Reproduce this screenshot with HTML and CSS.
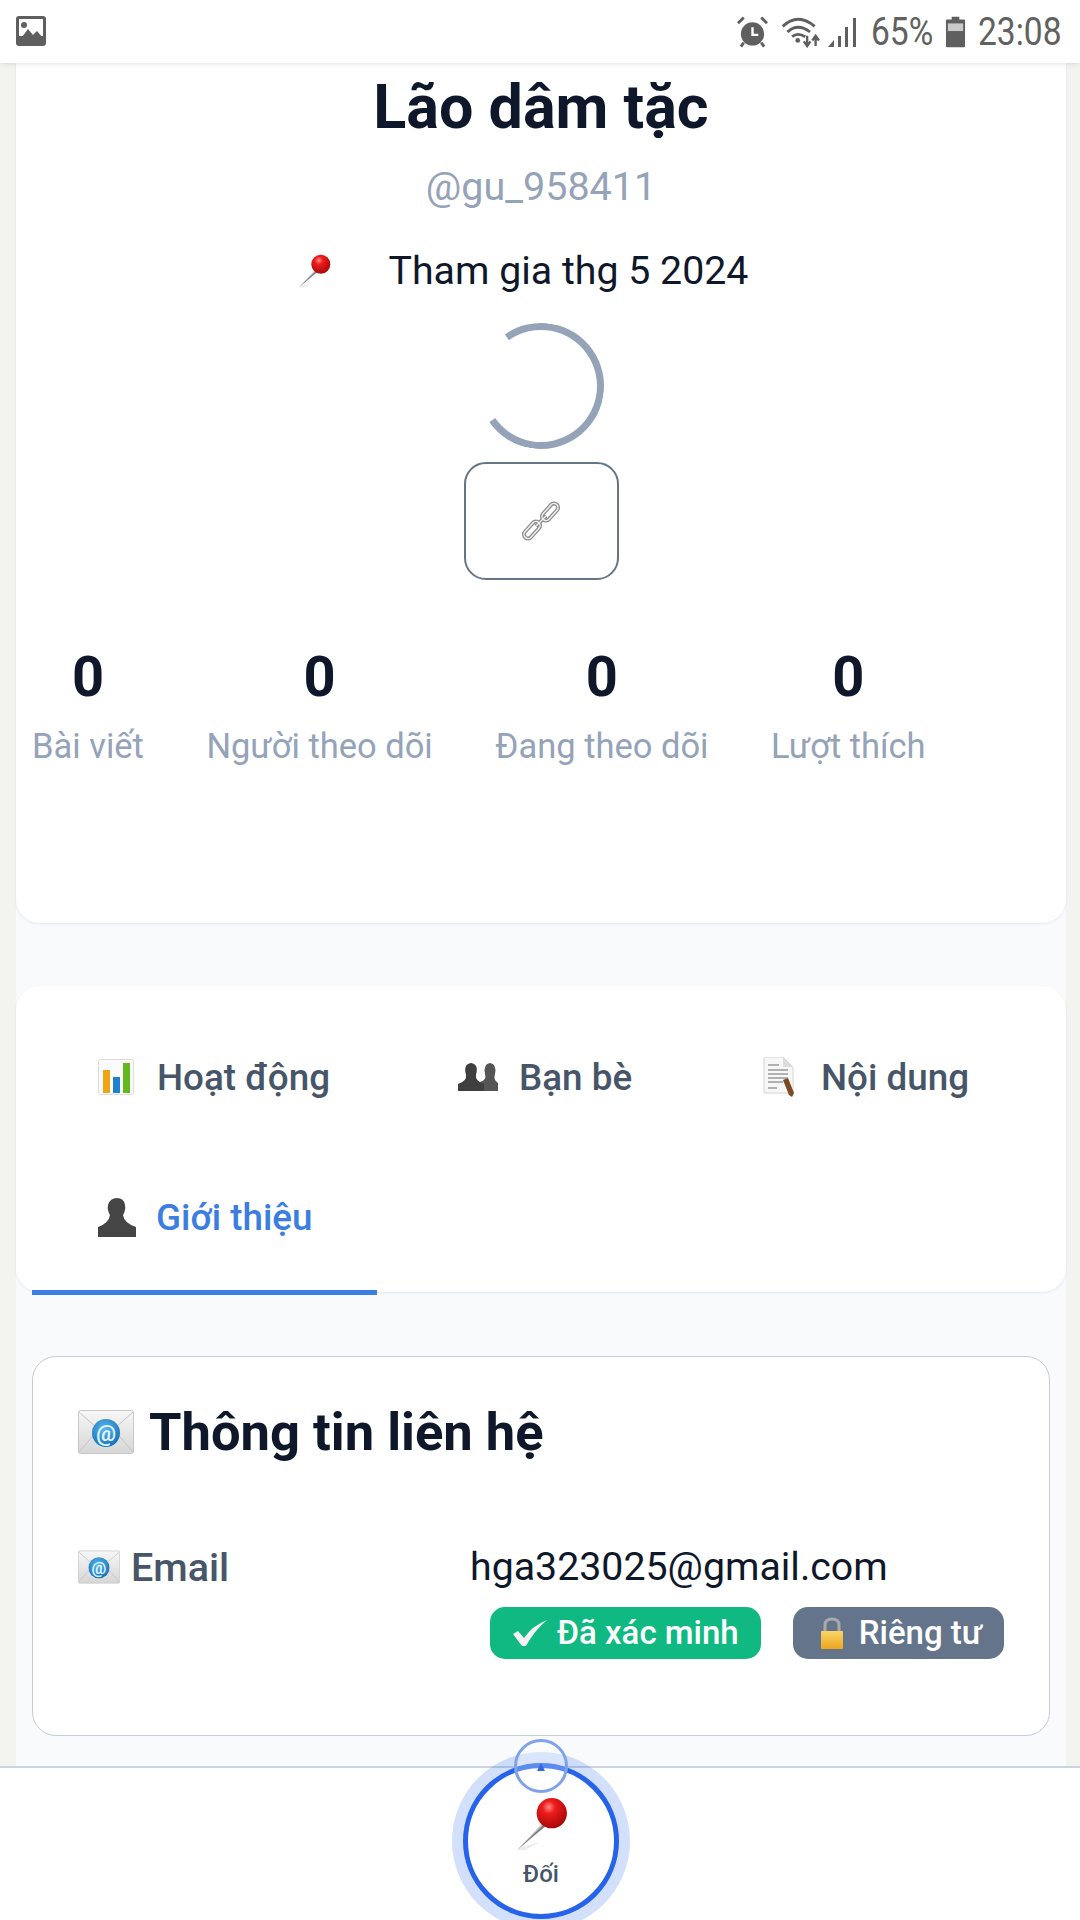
FILE: index.html
```html
<!DOCTYPE html>
<html lang="vi">

<head>
    <meta charset="UTF-8">
    <meta name="viewport" content="width=device-width, initial-scale=1.0">
    <title>Lão dâm tặc</title>
    <link rel="stylesheet" href="styles.css">
</head>

<body>
    <svg class="icon-defs" width="0" height="0">
        <defs>
            <radialGradient id="pinHead" cx="40%" cy="30%" r="70%">
                <stop offset="0" stop-color="#ff8a8a"/>
                <stop offset="0.3" stop-color="#ee1c1c"/>
                <stop offset="1" stop-color="#a80808"/>
            </radialGradient>
            <linearGradient id="paper" x1="0" y1="0" x2="0" y2="1">
                <stop offset="0" stop-color="#f7f7f7"/>
                <stop offset="1" stop-color="#d6d6d6"/>
            </linearGradient>
            <radialGradient id="atBlue" cx="45%" cy="35%" r="70%">
                <stop offset="0" stop-color="#5db7ec"/>
                <stop offset="1" stop-color="#0f6fb5"/>
            </radialGradient>
            <linearGradient id="shackle" x1="0" y1="0" x2="0" y2="1">
                <stop offset="0" stop-color="#f9d667"/>
                <stop offset="1" stop-color="#eda51c"/>
            </linearGradient>
        </defs>
        <symbol id="pin" viewBox="0 0 50 50">
            <path d="M3 49 L10 49 L24 42 L8 46 Z" fill="#ddd" opacity="0.6"/>
            <path d="M3 49 L31 20 L34 23 Z" fill="#7d7d7d"/>
            <path d="M3 49 L31 20 L32 21 Z" fill="#c9c9c9"/>
            <circle cx="35" cy="15" r="14" fill="url(#pinHead)"/>
        </symbol>
    </svg>

    <div class="phone">
        <header class="status-bar">
            <svg class="status-picture" viewBox="0 0 30 30" width="30" height="30">
                <rect width="30" height="30" rx="3" fill="#5f5f5f"/>
                <rect x="3" y="3" width="24" height="17" fill="#fff"/>
                <circle cx="8" cy="9" r="3" fill="#5f5f5f"/>
                <path d="M3 25 L12 13 L17 19 L21 15 L27 22 V27 H3 Z" fill="#5f5f5f"/>
            </svg>
            <div class="status-right">
                <svg viewBox="0 0 32 32" width="31" height="32">
                    <circle cx="16" cy="18" r="12" fill="#5f5f5f"/>
                    <path d="M1 7 L7 1 M31 7 L25 1 M7 27 L4 31 M25 27 L28 31" stroke="#5f5f5f" stroke-width="3"/>
                    <path d="M16 11 V19 H22" fill="none" stroke="#fff" stroke-width="2.500"/>
                </svg>
                <svg class="status-wifi" viewBox="0 0 44 34" width="43" height="32">
                    <path d="M2 11 Q18 -4 36 11 M7 17 Q18 7 31 17 M12 22 Q18 17 26 22" fill="none" stroke="#5f5f5f" stroke-width="3"/>
                    <circle cx="18" cy="26" r="2.500" fill="#5f5f5f"/>
                    <path d="M28 21 V31 M24.500 27 L28 32 L31.500 27 M37 32 V22 M33.500 26 L37 21 L40.500 26" fill="none" stroke="#5f5f5f" stroke-width="2.500"/>
                </svg>
                <svg class="status-signal" viewBox="0 0 32 32" width="32" height="32">
                    <path d="M0 31 L6 24 V31 Z M10 20 H13 V31 H10 Z M17 11 H20 V31 H17 Z M25 2 H28 V31 H25 Z" fill="#5f5f5f"/>
                </svg>
                <span class="status-text status-battery">65%</span>
                <svg viewBox="0 0 22 32" width="21" height="32">
                    <path d="M7 0 H15 V3 H20 Q21 3 21 4 V31 Q21 32 20 32 H2 Q1 32 1 31 V4 Q1 3 2 3 H7 Z" fill="#5f5f5f"/>
                    <rect x="3" y="7" width="16" height="8" fill="#c9c9c9"/>
                </svg>
                <span class="status-text status-time">23:08</span>
            </div>
        </header>

        <main class="content">
            <section class="card profile">
                <h1 class="profile-name">Lão dâm tặc</h1>
                <p class="profile-handle">@gu_958411</p>
                <p class="profile-joined">
                    <svg width="34" height="34"><use href="#pin"/></svg>
                    <span>Tham gia thg 5 2024</span>
                </p>
                <div class="spinner"></div>
                <button class="link-btn" type="button">
                    <svg viewBox="0 0 40 40" width="40" height="40">
                        <g fill="none" stroke="#8d8d8d" stroke-width="4">
                            <rect x="25" y="1" width="8" height="20" rx="4" transform="rotate(42 29 11)"/>
                            <rect x="7" y="19" width="8" height="20" rx="4" transform="rotate(42 11 29)"/>
                            <path d="M15 25 L25 15"/>
                        </g>
                        <g fill="none" stroke="#eeeeee" stroke-width="1.500">
                            <rect x="25" y="1" width="8" height="20" rx="4" transform="rotate(42 29 11)"/>
                            <rect x="7" y="19" width="8" height="20" rx="4" transform="rotate(42 11 29)"/>
                            <path d="M15 25 L25 15"/>
                        </g>
                    </svg>
                </button>
                <div class="stats">
                    <div class="stat"><strong>0</strong><span>Bài viết</span></div>
                    <div class="stat"><strong>0</strong><span>Người theo dõi</span></div>
                    <div class="stat"><strong>0</strong><span>Đang theo dõi</span></div>
                    <div class="stat"><strong>0</strong><span>Lượt thích</span></div>
                </div>
            </section>

            <nav class="card tabs">
                <a class="tab tab-first">
                    <svg viewBox="0 0 38 36" width="38" height="36">
                        <rect x="0.500" y="0.500" width="35" height="35" rx="2" fill="#fbfbfb" stroke="#dcdcdc"/>
                        <rect x="5" y="11" width="7" height="23" fill="#eda514"/>
                        <rect x="15" y="18" width="7" height="16" fill="#1c82cf"/>
                        <rect x="25" y="4" width="7" height="30" fill="#63b81f"/>
                    </svg>
                    <span>Hoạt động</span>
                </a>
                <a class="tab">
                    <svg viewBox="0 0 40 28" width="40" height="28">
                        <path d="M22 28 V19 Q29 17 27 11 Q25 1 32 0 Q39 1 37 11 Q35 17 40 20 V28 Z" fill="#555"/>
                        <path d="M0 28 V21 Q9 18 8 12 Q5 1 13 0 Q21 1 18 12 Q17 18 26 21 V28 Z" fill="#3f3f3f"/>
                    </svg>
                    <span>Bạn bè</span>
                </a>
                <a class="tab">
                    <svg viewBox="0 0 37 40" width="37" height="40">
                        <path d="M1 0 H20 L30 10 V36 H1 Z" fill="#f7f7f7" stroke="#d4d4d4"/>
                        <path d="M20 0 V10 H30 Z" fill="#dcdcdc"/>
                        <path d="M5 8 H16 M5 13 H25 M5 17 H25 M5 21 H25 M5 25 H20 M5 31 H14" stroke="#9a9a9a" stroke-width="1.500"/>
                        <path d="M20 23 L25 21 L31 36 L29 40 L26 38 Z" fill="#7b4b25"/>
                    </svg>
                    <span>Nội dung</span>
                </a>
                <a class="tab tab-first tab-active">
                    <svg viewBox="0 0 39 39" width="39" height="39">
                        <path d="M0 39 V29 Q11 25 12 17 Q9 12 10 7 Q12 0 19 0 Q26 0 27 7 Q28 12 25 17 Q26 25 38 29 V39 Z" fill="#454545"/>
                    </svg>
                    <span>Giới thiệu</span>
                </a>
            </nav>

            <section class="info-card">
                <h2 class="info-title">
                    <svg viewBox="0 0 56 44" width="56" height="44">
                        <rect x="0.500" y="0.500" width="55" height="43" rx="2" fill="url(#paper)" stroke="#c8c8c8"/>
                        <path d="M1 2 L28 26 L55 2 M1 42 L20 20 M55 42 L36 20" fill="none" stroke="#c4c4c4"/>
                        <circle cx="28" cy="23" r="14" fill="url(#atBlue)"/>
                        <text x="28" y="31" text-anchor="middle" font-family="Roboto" font-weight="700" font-size="22" fill="#dff2ff">@</text>
                    </svg>
                    <span>Thông tin liên hệ</span>
                </h2>
                <div class="info-row">
                    <div class="info-label">
                        <svg viewBox="0 0 56 44" width="42" height="34">
                            <rect x="0.500" y="0.500" width="55" height="43" rx="2" fill="url(#paper)" stroke="#c8c8c8"/>
                            <path d="M1 2 L28 26 L55 2 M1 42 L20 20 M55 42 L36 20" fill="none" stroke="#c4c4c4"/>
                            <circle cx="28" cy="23" r="14" fill="url(#atBlue)"/>
                            <text x="28" y="31" text-anchor="middle" font-family="Roboto" font-weight="700" font-size="22" fill="#dff2ff">@</text>
                        </svg>
                        <span>Email</span>
                    </div>
                    <div class="info-value">
                        <span>hga323025@gmail.com</span>
                        <div class="badges">
                            <span class="badge badge-green">
                                <svg viewBox="0 0 36 28" width="36" height="28">
                                    <path d="M1 15 L6 12 L12 19 Q20 7 35 1 Q22 12 14 27 L10 27 Z" fill="#f2f2f2"/>
                                </svg>
                                Đã xác minh
                            </span>
                            <span class="badge badge-gray">
                                <svg viewBox="0 0 26 32" width="26" height="32">
                                    <path d="M6 16 V8 Q6 2 13 2 Q20 2 20 8 V16" fill="none" stroke="#a9a9a9" stroke-width="3"/>
                                    <rect x="2" y="14" width="22" height="18" rx="1" fill="url(#shackle)"/>
                                </svg>
                                Riêng tư
                            </span>
                        </div>
                    </div>
                </div>
            </section>
        </main>

        <footer class="bottom-nav">
            <div class="follow-btn">
                <svg width="54" height="54"><use href="#pin"/></svg>
                <span>Đối</span>
            </div>
            <div class="expand-btn"><i></i></div>
        </footer>
    </div>
</body>

</html>
```

FILE: styles.css
```css
* {
    box-sizing: border-box;
}

html,
body {
    margin: 0;
    padding: 0;
}

body {
    font-family: Roboto, "Noto Sans", sans-serif;
    color: #0f172a;
    background-color: #f3f4ef;
}

.icon-defs {
    position: absolute;
}

.phone {
    position: relative;
    width: 1080px;
    height: 1920px;
    overflow: hidden;
}

/* Status bar */
.status-bar {
    position: relative;
    z-index: 2;
    height: 63px;
    padding: 16px 19px 0 16px;
    display: flex;
    justify-content: space-between;
    align-items: flex-start;
    background-color: #fff;
    box-shadow: 0 1px 5px rgba(0, 0, 0, 0.1);
}

.status-right {
    display: flex;
    align-items: center;
    gap: 13px;
    margin-top: -1px;
}

.status-wifi {
    margin-left: -1px;
}

.status-signal {
    margin-left: -8px;
}

.status-text {
    font-size: 39px;
    line-height: 34px;
    color: #616161;
    white-space: nowrap;
    transform-origin: left center;
    transform: scaleX(0.86);
}

.status-battery {
    width: 61px;
    margin-left: -2px;
}

.status-time {
    width: 83px;
    margin-left: -1px;
}

/* Main column */
.content {
    margin: 0 14px 0 16px;
    background-color: #f8fafc;
    height: 1857px;
}

.card {
    background-color: #fff;
    border-radius: 24px;
    box-shadow: 0 1px 3px rgba(0, 0, 0, 0.08);
}

.profile {
    height: 860px;
    padding-top: 6px;
    border-radius: 0 0 24px 24px;
    display: flex;
    flex-direction: column;
    align-items: center;
}

.profile-name {
    margin: 0;
    font-size: 61px;
    line-height: 76px;
    font-weight: 700;
}

.profile-handle {
    margin: 18px 0 0;
    font-size: 39.500px;
    line-height: 48px;
    color: #94a3b8;
}

.profile-joined {
    margin: 38px 0 0;
    padding-right: 37px;
    display: flex;
    align-items: center;
    gap: 58px;
    font-size: 39.300px;
    line-height: 44px;
}

.spinner {
    width: 126px;
    height: 126px;
    margin-top: 30px;
    border: 7px solid #94a3b8;
    border-left-color: transparent;
    border-radius: 50%;
    transform: rotate(10deg);
}

.link-btn {
    width: 155px;
    height: 118px;
    margin-top: 13px;
    display: flex;
    align-items: center;
    justify-content: center;
    background: #fff;
    border: 2px solid #667585;
    border-radius: 22px;
}

.stats {
    align-self: flex-start;
    display: flex;
    gap: 62.500px;
    margin-top: 64px;
    padding-left: 16px;
}

.stat {
    display: flex;
    flex-direction: column;
    align-items: center;
    gap: 16px;
}

.stat strong {
    font-size: 56px;
    line-height: 66px;
    font-weight: 700;
}

.stat span {
    font-size: 34.500px;
    line-height: 40px;
    color: #94a3b8;
}

/* Tabs */
.tabs {
    margin-top: 63px;
    height: 306px;
    padding: 21px 0 5px 16px;
    display: grid;
    grid-template-columns: 345px 305px 368px;
    grid-auto-rows: 140px;
}

.tab {
    position: relative;
    display: flex;
    align-items: center;
    gap: 21px;
    padding-left: 81px;
    font-size: 36.800px;
    font-weight: 500;
    color: #475569;
}

.tab-first {
    padding-left: 66px;
}

.tab-active {
    gap: 19px;
    color: #3b7de0;
}

.tab-active::after {
    content: "";
    position: absolute;
    left: 0;
    right: 0;
    bottom: -8px;
    height: 5px;
    background-color: #3b7de0;
}

/* Contact info */
.info-card {
    margin: 64px 16px 0;
    height: 380px;
    padding: 53px 0 0 45px;
    background-color: #fff;
    border: 1px solid #c3ccd8;
    border-radius: 24px;
}

.info-title {
    margin: 0;
    display: flex;
    align-items: center;
    gap: 15px;
    font-size: 52.500px;
    line-height: 44px;
    font-weight: 700;
}

.info-row {
    display: flex;
    margin-top: 91px;
}

.info-label {
    width: 392px;
    height: 44px;
    display: flex;
    align-items: center;
    gap: 11px;
    font-size: 39.500px;
    font-weight: 500;
    color: #475569;
}

.info-value {
    display: flex;
    flex-direction: column;
    font-size: 39.300px;
    line-height: 44px;
}

.badges {
    display: flex;
    gap: 32px;
    margin: 18px 0 0 20px;
}

.badge {
    height: 52px;
    display: inline-flex;
    align-items: center;
    gap: 9px;
    padding: 0 22px;
    border-radius: 15px;
    font-size: 33px;
    line-height: 52px;
    font-weight: 500;
    color: #fff;
}

.badge-green {
    background-color: #10b981;
}

.badge-gray {
    padding-left: 26px;
    gap: 14px;
    background-color: #64748b;
}

/* Bottom nav with the floating follow button */
.bottom-nav {
    position: absolute;
    left: 0;
    right: 0;
    bottom: 0;
    height: 154px;
    background-color: #fff;
    border-top: 2px solid #cbd5e1;
}

.follow-btn {
    position: absolute;
    left: 463px;
    top: -5px;
    width: 156px;
    height: 156px;
    display: flex;
    flex-direction: column;
    align-items: center;
    padding-top: 29px;
    background-color: #fff;
    border: 5px solid #2563eb;
    border-radius: 50%;
    box-shadow: 0 0 0 11px rgba(37, 99, 235, 0.2);
    font-size: 24px;
    line-height: 30px;
    font-weight: 500;
    color: #475569;
}

.follow-btn span {
    margin-top: 8px;
}

.expand-btn {
    position: absolute;
    left: 514px;
    top: -29px;
    width: 54px;
    height: 54px;
    border: 3px solid #7fa2ea;
    border-radius: 50%;
    background-color: rgba(255, 255, 255, 0.25);
}

.expand-btn i {
    display: block;
    width: 0;
    height: 0;
    margin: 21px auto 0;
    border-left: 4px solid transparent;
    border-right: 4px solid transparent;
    border-bottom: 8px solid #2f6ae0;
}
```
